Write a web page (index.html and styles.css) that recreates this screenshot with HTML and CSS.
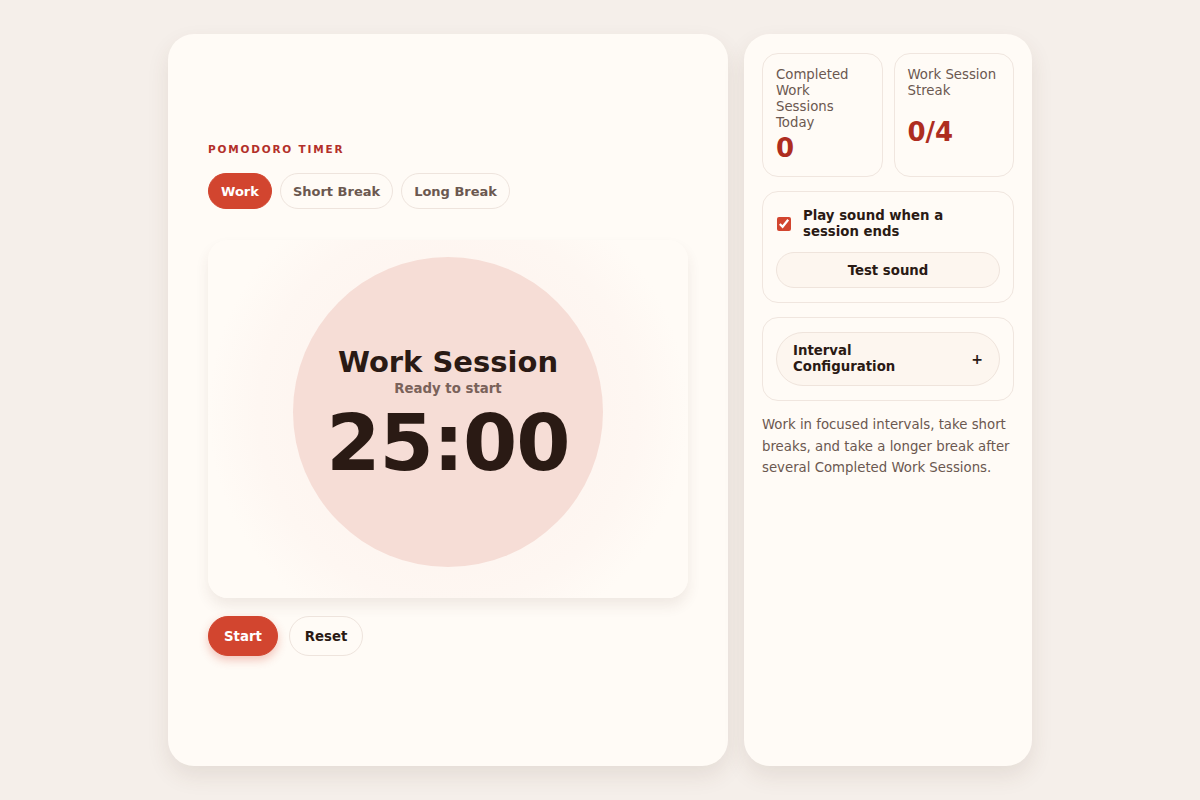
FILE: index.html
```html
<!DOCTYPE html>
<html lang="en">
<head>
  <meta charset="UTF-8">
  <meta name="viewport" content="width=device-width, initial-scale=1.0">
  <title>Pomodoro Timer</title>
  <link rel="stylesheet" href="styles.css">
</head>
<body>
  <div class="layout">
    <main class="card timer-card">
      <div class="timer-inner">
        <p class="eyebrow">POMODORO TIMER</p>
        <div class="tabs">
          <button class="tab active">Work</button>
          <button class="tab">Short Break</button>
          <button class="tab">Long Break</button>
        </div>
        <div class="panel">
          <div class="dial">
            <h2 class="session">Work Session</h2>
            <p class="state">Ready to start</p>
            <div class="time">25:00</div>
          </div>
        </div>
        <div class="controls">
          <button class="btn primary">Start</button>
          <button class="btn">Reset</button>
        </div>
      </div>
    </main>

    <aside class="card side">
      <div class="stats">
        <div class="stat">
          <span class="stat-label">Completed Work Sessions Today</span>
          <span class="stat-value">0</span>
        </div>
        <div class="stat">
          <span class="stat-label">Work Session Streak</span>
          <span class="stat-value">0/4</span>
        </div>
      </div>

      <div class="box">
        <label class="check">
          <input type="checkbox" checked>
          <span>Play sound when a session ends</span>
        </label>
        <button class="pill wide">Test sound</button>
      </div>

      <div class="box">
        <button class="pill toggle">
          <span class="toggle-text">Interval Configuration</span>
          <span class="plus">+</span>
        </button>
      </div>

      <p class="note">Work in focused intervals, take short breaks, and take a longer break after several Completed Work Sessions.</p>
    </aside>
  </div>
</body>
</html>
```

FILE: styles.css
```css
/* Base */
* {
  box-sizing: border-box;
}

body {
  margin: 0;
  background: #f5efea;
  font-family: "DejaVu Sans", sans-serif;
  color: #2a1a14;
}

button {
  font-family: inherit;
  cursor: pointer;
}

.layout {
  display: flex;
  justify-content: center;
  gap: 16px;
  padding: 34px 0;
}

.card {
  background: #fffbf6;
  border-radius: 26px;
  box-shadow: 0 10px 22px rgba(90, 60, 40, 0.1);
  height: 732px;
}

/* Timer card */
.timer-card {
  width: 560px;
  padding: 0 40px 2px;
  display: flex;
  align-items: center;
}

.timer-inner {
  width: 100%;
}

.eyebrow {
  margin: 0 0 17px;
  font-size: 10.5px;
  line-height: 14px;
  font-weight: bold;
  letter-spacing: 1.8px;
  color: #b3302a;
}

.tabs {
  display: flex;
  gap: 8px;
  margin-bottom: 31px;
}

.tab {
  height: 36px;
  padding: 0 12px;
  border: 1px solid #eee4dd;
  border-radius: 18px;
  background: #fffbf6;
  color: #6b5850;
  font-size: 13px;
  font-weight: bold;
}

.tab.active {
  background: #d2452f;
  border-color: #d2452f;
  color: #fff;
}

.panel {
  height: 358px;
  padding-top: 17px;
  border-radius: 20px;
  background: radial-gradient(circle at 50% 48%, #fdf1ec 0, #fef7f2 190px, #fffbf6 240px);
  box-shadow: 0 8px 14px rgba(90, 60, 40, 0.09);
  display: flex;
  align-items: flex-start;
  justify-content: center;
}

.dial {
  width: 310px;
  height: 310px;
  border-radius: 50%;
  background: #f6ddd6;
  display: flex;
  flex-direction: column;
  align-items: center;
  justify-content: center;
  padding-top: 8px;
}

.session {
  margin: 0;
  font-size: 29px;
  line-height: 34px;
  color: #2a1a14;
}

.state {
  margin: 0;
  font-size: 13.3px;
  font-weight: bold;
  line-height: 20px;
  color: #7a625a;
}

.time {
  font-size: 78px;
  font-weight: bold;
  letter-spacing: -1px;
  line-height: 88px;
  color: #2a1a14;
}

.controls {
  display: flex;
  gap: 11px;
  margin-top: 18px;
}

.btn {
  height: 40px;
  padding: 0 15px;
  border: 1px solid #eee4dd;
  border-radius: 20px;
  background: #fffbf6;
  color: #2a1a14;
  font-size: 13.3px;
  font-weight: bold;
}

.btn.primary {
  background: #d2452f;
  border-color: #d2452f;
  color: #fff;
  box-shadow: 0 4px 10px rgba(210, 69, 47, 0.3);
}

/* Side card */
.side {
  width: 288px;
  padding: 19px 18px;
  display: flex;
  flex-direction: column;
  gap: 14px;
}

.stats {
  display: grid;
  grid-template-columns: 1fr 1fr;
  gap: 11px;
}

.stat {
  height: 124px;
  padding: 13px 13px 11px;
  border: 1px solid #f0e6df;
  border-radius: 16px;
  display: flex;
  flex-direction: column;
}

.stat-label {
  font-size: 13.3px;
  line-height: 16px;
  color: #6b5850;
}

.stat-value {
  margin: auto 0;
  font-size: 26px;
  font-weight: bold;
  line-height: 34px;
  color: #ae2d1f;
}

.box {
  border: 1px solid #f0e6df;
  border-radius: 16px;
  padding: 14px 13px;
  display: flex;
  flex-direction: column;
  gap: 14px;
}

.box:has(.check) {
  padding-top: 16px;
  gap: 12px;
}

.check {
  display: flex;
  align-items: center;
  gap: 12px;
  font-size: 13.3px;
  font-weight: bold;
  line-height: 16px;
  color: #2a1a14;
}

.check input {
  width: 14px;
  height: 14px;
  margin: 0 0 0 1px;
  flex-shrink: 0;
  accent-color: #d2452f;
}

.pill {
  border: 1px solid #efe4dc;
  background: #fdf6ef;
  color: #2a1a14;
  font-size: 13.3px;
  font-weight: bold;
}

.wide {
  height: 36px;
  border-radius: 18px;
}

.toggle {
  height: 54px;
  border-radius: 28px;
  padding: 0 16px;
  display: flex;
  align-items: center;
  justify-content: space-between;
  text-align: left;
  line-height: 16px;
}

.toggle-text {
  max-width: 130px;
}

.plus {
  font-size: 14px;
  font-weight: bold;
}

.note {
  margin: -1px 0 0;
  font-size: 13.3px;
  line-height: 21.5px;
  color: #6b5850;
}
```
